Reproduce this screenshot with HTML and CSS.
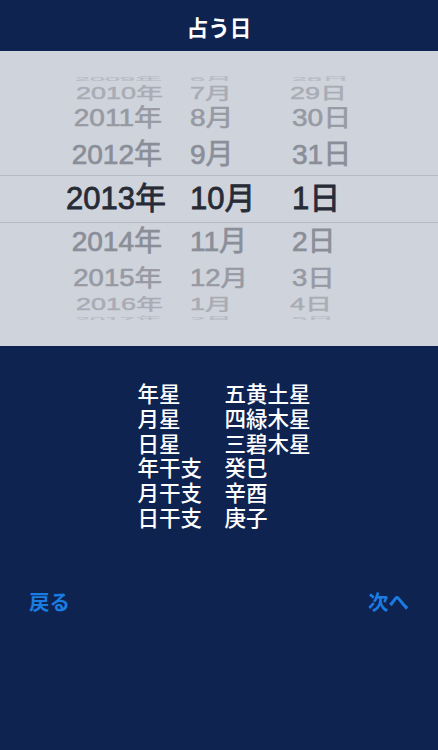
FILE: index.html
```html
<!DOCTYPE html>
<html lang="ja">
<head>
    <meta charset="utf-8">
    <title>占う日</title>
    <link rel="stylesheet" href="styles.css">
</head>
<body>
    <div class="screen">
        <div class="header">占う日</div>

        <div class="picker">
            <div class="row row-edge-top"><span class="year">2009年</span><span class="month">6月</span><span class="day">28日</span></div>
            <div class="row row-far-top"><span class="year">2010年</span><span class="month">7月</span><span class="day">29日</span></div>
            <div class="row row-mid-top"><span class="year">2011年</span><span class="month">8月</span><span class="day">30日</span></div>
            <div class="row row-near-top"><span class="year">2012年</span><span class="month">9月</span><span class="day">31日</span></div>
            <div class="row row-selected"><span class="year">2013年</span><span class="month">10月</span><span class="day">1日</span></div>
            <div class="row row-near-bottom"><span class="year">2014年</span><span class="month">11月</span><span class="day">2日</span></div>
            <div class="row row-mid-bottom"><span class="year">2015年</span><span class="month">12月</span><span class="day">3日</span></div>
            <div class="row row-far-bottom"><span class="year">2016年</span><span class="month">1月</span><span class="day">4日</span></div>
            <div class="row row-edge-bottom"><span class="year">2017年</span><span class="month">2月</span><span class="day">5日</span></div>
        </div>

        <div class="stars">
            <div>年星</div><div>五黄土星</div>
            <div>月星</div><div>四緑木星</div>
            <div>日星</div><div>三碧木星</div>
            <div>年干支</div><div>癸巳</div>
            <div>月干支</div><div>辛酉</div>
            <div>日干支</div><div>庚子</div>
        </div>

        <div class="nav">
            <button>戻る</button>
            <button>次へ</button>
        </div>
    </div>
</body>
</html>
```

FILE: styles.css
```css
* {
    box-sizing: border-box;
}
html, body {
    margin: 0;
    padding: 0;
}
body {
    font-family: "Liberation Sans", "Noto Sans CJK JP", sans-serif;
    background-color: #0e2350;
}
.screen {
    width: 438px;
    height: 750px;
    overflow: hidden;
    background-color: #0e2350;
    color: white;
}
.header {
    height: 51px;
    line-height: 58px;
    text-align: center;
    font-size: 21.5px;
    font-weight: bold;
}
.picker {
    height: 295px;
    padding-top: 25px;
    background-color: #cfd3dc;
    overflow: hidden;
}
.row {
    display: grid;
    grid-template-columns: 166px 102px 1fr;
    grid-template-rows: minmax(0, 1fr);
    align-items: center;
    overflow: hidden;
    white-space: nowrap;
    font-size: 28px;
    -webkit-text-stroke: 0.7px currentColor;
}
.row span {
    display: block;
    line-height: 1;
}
.year {
    text-align: right;
    padding-right: 4px;
}
.month {
    padding-left: 24px;
}
.day {
    padding-left: 24px;
}
.row-edge-top {
    height: 5px;
    align-items: start;
    color: #b9bcc4;
    font-size: 27px;
}
.row-edge-top span {
    transform: scaleY(0.22);
    transform-origin: 0 0;
}
.row-far-top {
    height: 21px;
    padding-top: 5px;
    color: #a9acb4;
    font-size: 27px;
}
.row-far-top span {
    transform: scaleY(0.58);
}
.row-far-top .year,
.row-far-bottom .year {
    padding-right: 3px;
}
.row-far-top .day,
.row-far-bottom .day {
    padding-left: 22px;
}
.row-mid-top {
    height: 32px;
    color: #979aa3;
    font-size: 28px;
}
.row-mid-top span {
    transform: scaleY(0.84);
}
.row-near-top {
    height: 41px;
    color: #8a8e98;
}
.row-selected {
    height: 48px;
    padding-bottom: 2px;
    color: #272b35;
    font-size: 31px;
    border-top: 1px solid #b6bac3;
    border-bottom: 1px solid #b6bac3;
    -webkit-text-stroke: 0.8px currentColor;
}
.row-selected .year {
    padding-right: 0;
}
.row-near-bottom {
    height: 37px;
    color: #8a8e98;
}
.row-mid-bottom {
    height: 36px;
    color: #979aa3;
    font-size: 27.5px;
}
.row-mid-bottom span {
    transform: scaleY(0.84);
}
.row-far-bottom {
    height: 16px;
    padding-top: 3px;
    color: #a9acb4;
    font-size: 27px;
}
.row-far-bottom span {
    transform: scaleY(0.58);
}
.row-edge-bottom {
    height: 8px;
    padding-top: 4px;
    align-items: start;
    color: #b9bcc4;
    font-size: 27px;
}
.row-edge-bottom span {
    transform: scaleY(0.22);
    transform-origin: 0 0;
}
.stars {
    display: grid;
    grid-template-columns: 87px 1fr;
    padding: 37px 0 0 137.5px;
    font-size: 21.5px;
    line-height: 24.8px;
    font-weight: 500;
}
.nav {
    display: flex;
    justify-content: space-between;
    padding: 57px 29px 0;
}
.nav button {
    padding: 0;
    border: none;
    background: none;
    color: #1a7ce0;
    font-family: inherit;
    font-size: 20.5px;
    font-weight: bold;
    line-height: 28px;
}
```
